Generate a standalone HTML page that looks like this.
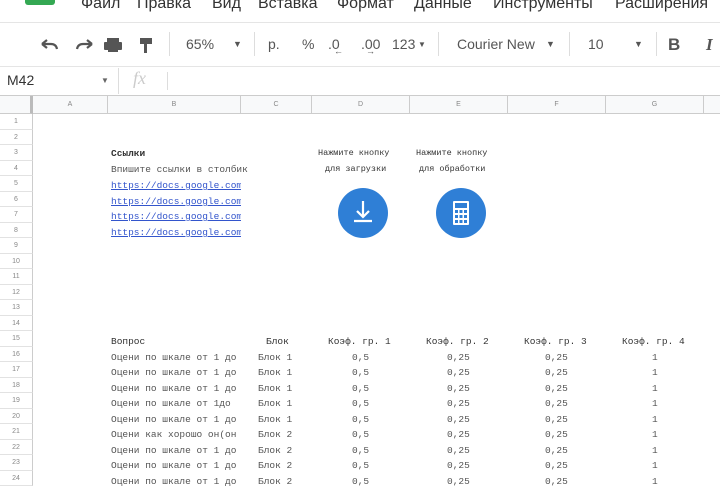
<!DOCTYPE html>
<html><head><meta charset="utf-8"><style>
*{margin:0;padding:0;box-sizing:border-box}
body{width:720px;height:480px;overflow:hidden;background:#fff;font-family:"Liberation Sans",sans-serif;position:relative;color:#444}
.a{position:absolute;white-space:nowrap}
.menu{top:-5px;font-size:16px;color:#333}
.tb{top:36px;font-size:14px;color:#555}
.m{font-family:"Liberation Mono",monospace;font-size:9.5px;color:#333}
.rn{position:absolute;left:0;width:33px;font-size:7px;color:#888;text-align:center;border-bottom:1px solid #e2e2e2;border-right:1px solid #ccc;background:#fff}
.ch{position:absolute;top:96px;height:18px;font-size:7px;color:#888;text-align:center;line-height:18px;border-right:1px solid #ccc;background:#f8f9fa;border-bottom:1px solid #ccc}
</style></head><body>
<div class="a" style="left:25px;top:-10px;width:30px;height:15px;background:#34a853;border-radius:3px"></div>
<div class="a menu" style="left:81px">Файл</div>
<div class="a menu" style="left:137px">Правка</div>
<div class="a menu" style="left:212px">Вид</div>
<div class="a menu" style="left:258px">Вставка</div>
<div class="a menu" style="left:337px">Формат</div>
<div class="a menu" style="left:414px">Данные</div>
<div class="a menu" style="left:493px">Инструменты</div>
<div class="a menu" style="left:615px">Расширения</div>
<div class="a" style="left:0;top:22px;width:720px;height:1px;background:#e5e5e5"></div>
<svg class="a" style="left:38px;top:36px" width="130" height="18" viewBox="0 0 130 18">
<path d="M4 8 L9 4 M4 8 L9 12 M4 8 H13 Q18 8 19 13" stroke="#555" stroke-width="2.2" fill="none"/>
<path d="M54 8 L49 4 M54 8 L49 12 M54 8 H45 Q40 8 39 13" stroke="#555" stroke-width="2.2" fill="none"/>
<rect x="69" y="2" width="12" height="4" fill="#555"/><rect x="66" y="6" width="18" height="8" rx="1" fill="#555"/><rect x="70" y="11" width="10" height="5" fill="#555"/>
<rect x="102" y="2" width="12" height="6" fill="#555"/><rect x="106" y="8" width="3" height="9" fill="#555"/>
</svg>
<div class="a" style="left:169px;top:32px;width:1px;height:24px;background:#ddd"></div>
<div class="a tb" style="left:186px">65%</div>
<div class="a tb" style="left:233px;font-size:9px;top:39px">▼</div>
<div class="a" style="left:254px;top:32px;width:1px;height:24px;background:#ddd"></div>
<div class="a tb" style="left:268px">р.</div>
<div class="a tb" style="left:302px">%</div>
<div class="a tb" style="left:328px">.0</div>
<div class="a tb" style="left:334px;top:46px;font-size:9px">←</div>
<div class="a tb" style="left:361px">.00</div>
<div class="a tb" style="left:366px;top:46px;font-size:9px">→</div>
<div class="a tb" style="left:392px">123</div>
<div class="a tb" style="left:418px;font-size:8px;top:40px">▼</div>
<div class="a" style="left:438px;top:32px;width:1px;height:24px;background:#ddd"></div>
<div class="a tb" style="left:457px">Courier New</div>
<div class="a tb" style="left:546px;font-size:9px;top:39px">▼</div>
<div class="a" style="left:569px;top:32px;width:1px;height:24px;background:#ddd"></div>
<div class="a tb" style="left:588px">10</div>
<div class="a tb" style="left:634px;font-size:9px;top:39px">▼</div>
<div class="a" style="left:656px;top:32px;width:1px;height:24px;background:#ddd"></div>
<div class="a tb" style="left:668px;font-weight:bold;font-size:17px;top:35px">B</div>
<div class="a tb" style="left:706px;font-style:italic;font-weight:bold;font-size:17px;top:35px;font-family:'Liberation Serif',serif">I</div>
<div class="a" style="left:0;top:66px;width:720px;height:1px;background:#e5e5e5"></div>
<div class="a" style="left:7px;top:72px;font-size:14px;color:#333">M42</div>
<div class="a" style="left:101px;top:76px;font-size:8px;color:#666">▼</div>
<div class="a" style="left:118px;top:68px;width:1px;height:26px;background:#ddd"></div>
<div class="a" style="left:133px;top:68px;font-size:18px;color:#ccc;font-style:italic;font-family:'Liberation Serif',serif">fx</div>
<div class="a" style="left:167px;top:72px;width:1px;height:18px;background:#ddd"></div>
<div class="a" style="left:0;top:95px;width:720px;height:1px;background:#ccc"></div>
<div class="ch" style="left:0;width:33px;border-right:3px solid #bbb"></div>
<div class="ch" style="left:33px;width:75px">A</div>
<div class="ch" style="left:108px;width:133px">B</div>
<div class="ch" style="left:241px;width:71px">C</div>
<div class="ch" style="left:312px;width:98px">D</div>
<div class="ch" style="left:410px;width:98px">E</div>
<div class="ch" style="left:508px;width:98px">F</div>
<div class="ch" style="left:606px;width:98px">G</div>
<div class="ch" style="left:704px;width:30px"></div>
<div id="rows"></div>
<script>
var h='';for(var i=1;i<=24;i++){var t=114+(i-1)*15.5;h+='<div class="rn" style="top:'+t+'px;height:15.5px;line-height:15.5px">'+i+'</div>';}
document.getElementById('rows').innerHTML=h;
</script>
<div class="a m" style="left:111px;top:148px;font-weight:bold">Ссылки</div>
<div class="a m" style="left:111px;top:164px;color:#555">Впишите ссылки в столбик</div>
<div class="a m" style="left:111px;top:180px;color:#3355cc;text-decoration:underline;width:130px;overflow:hidden">https://docs.google.com</div>
<div class="a m" style="left:111px;top:196px;color:#3355cc;text-decoration:underline;width:130px;overflow:hidden">https://docs.google.com</div>
<div class="a m" style="left:111px;top:211px;color:#3355cc;text-decoration:underline;width:130px;overflow:hidden">https://docs.google.com</div>
<div class="a m" style="left:111px;top:227px;color:#3355cc;text-decoration:underline;width:130px;overflow:hidden">https://docs.google.com</div>
<div class="a m" style="left:318px;top:148px;font-size:8.5px">Нажмите кнопку</div>
<div class="a m" style="left:325px;top:164px;font-size:8.5px">для загрузки</div>
<div class="a m" style="left:416px;top:148px;font-size:8.5px">Нажмите кнопку</div>
<div class="a m" style="left:419px;top:164px;font-size:8.5px">для обработки</div>
<svg class="a" style="left:337px;top:187px" width="52" height="52"><circle cx="26" cy="26" r="25" fill="#2f7fd6"/><path d="M26 14 V30 M20 24 L26 30 L32 24 M17 34 H35" stroke="#fff" stroke-width="2.2" fill="none"/></svg>
<svg class="a" style="left:435px;top:187px" width="52" height="52"><circle cx="26" cy="26" r="25" fill="#2f7fd6"/><rect x="18" y="14" width="16" height="24" rx="1" fill="#fff"/><rect x="20" y="16" width="12" height="5" fill="#2f7fd6"/><g fill="#2f7fd6"><rect x="20" y="23" width="3" height="3"/><rect x="24.5" y="23" width="3" height="3"/><rect x="29" y="23" width="3" height="3"/><rect x="20" y="28" width="3" height="3"/><rect x="24.5" y="28" width="3" height="3"/><rect x="29" y="28" width="3" height="3"/><rect x="20" y="33" width="3" height="3"/><rect x="24.5" y="33" width="3" height="3"/><rect x="29" y="33" width="3" height="3"/></g></svg>
<div id="tbl"></div>
<script>
var q=["Оцени по шкале от 1 до","Оцени по шкале от 1 до","Оцени по шкале от 1 до","Оцени по шкале от 1до","Оцени по шкале от 1 до","Оцени как хорошо он(он","Оцени по шкале от 1 до","Оцени по шкале от 1 до","Оцени по шкале от 1 до"];
var b=["Блок 1","Блок 1","Блок 1","Блок 1","Блок 1","Блок 2","Блок 2","Блок 2","Блок 2"];
var s='<div class="a m" style="left:111px;top:336px">Вопрос</div><div class="a m" style="left:266px;top:336px">Блок</div><div class="a m" style="left:328px;top:336px">Коэф. гр. 1</div><div class="a m" style="left:426px;top:336px">Коэф. гр. 2</div><div class="a m" style="left:524px;top:336px">Коэф. гр. 3</div><div class="a m" style="left:622px;top:336px">Коэф. гр. 4</div>';
for(var i=0;i<9;i++){var t=351.5+i*15.5;
s+='<div class="a m" style="color:#555;left:111px;top:'+t+'px;width:131px;overflow:hidden">'+q[i]+'</div><div class="a m" style="color:#555;left:258px;top:'+t+'px">'+b[i]+'</div><div class="a m" style="color:#555;left:352px;top:'+t+'px">0,5</div><div class="a m" style="color:#555;left:447px;top:'+t+'px">0,25</div><div class="a m" style="color:#555;left:545px;top:'+t+'px">0,25</div><div class="a m" style="color:#555;left:652px;top:'+t+'px">1</div>';}
document.getElementById('tbl').innerHTML=s;
</script>
</body></html>
